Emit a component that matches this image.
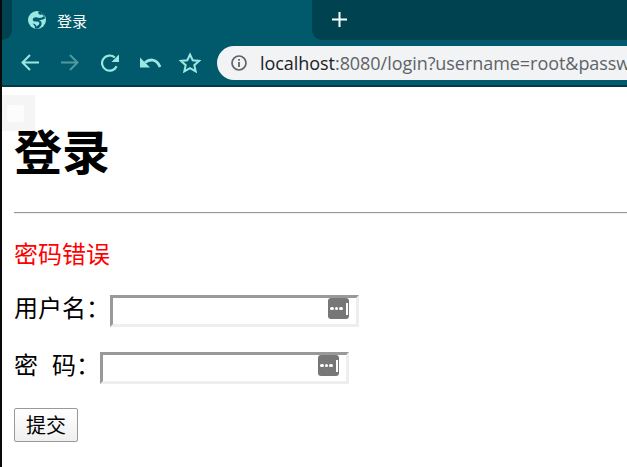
<div class="page">
  <div class="chrome">
    <div class="tabstrip">
      <div class="strip-left"></div>
      <div class="tab">
        <svg class="globe" width="18" height="18" viewBox="0 0 18 18" aria-hidden="true">
          <circle cx="9" cy="9" r="9" fill="#9be8e2"/>
          <path d="M10.5 0.5C9.5 3 11.5 4 14 3.5L16 5C14.5 7 11.5 7.5 9 6.5C7 5.8 4.5 7 4.8 9C5 10.8 7.5 10.5 9 10.5C11 10.5 12 12 11 13.5L8.5 15.5C8 13.5 6.5 12.7 4.5 12.5C6.5 14 7 15.5 7 17.5L9.5 17.8C12.5 16.5 14 14 13.5 11.5C13 9.5 10.5 8.5 8.8 8.8C10.5 9.5 14 9 17 7.5L16 3.5L12.5 0.5Z" fill="#005a6b"/>
        </svg>
        <span class="tabtitle">登录</span>
      </div>
      <div class="strip-right">
        <svg class="plus" width="15" height="15" viewBox="0 0 15 15" aria-hidden="true">
          <path d="M7.5 0V15M0 7.5H15" stroke="#fff" stroke-width="2"/>
        </svg>
      </div>
    </div>
    <div class="toolbar">
      <span class="cell"><svg width="18" height="17" viewBox="0 0 18 17" aria-hidden="true"><path d="M18 8.5H2M9 1L1.5 8.5L9 16" fill="none" stroke="#9be8e2" stroke-width="2"/></svg></span>
      <span class="cell"><svg width="18" height="17" viewBox="0 0 18 17" aria-hidden="true"><path d="M0 8.5H16M9 1L16.5 8.5L9 16" fill="none" stroke="#4f9a9f" stroke-width="2"/></svg></span>
      <span class="cell"><svg width="18" height="18" viewBox="0 0 18 18" aria-hidden="true"><path d="M15.6 12.2A7.6 7.6 0 1 1 13.8 3.5" fill="none" stroke="#9be8e2" stroke-width="2.2"/><path d="M18 0.5V8H10.5Z" fill="#9be8e2"/></svg></span>
      <span class="cell"><svg width="21" height="11" viewBox="0 0 21 11" aria-hidden="true"><path d="M5 5.5C10 1.5 17 2 20 10" fill="none" stroke="#9be8e2" stroke-width="2.8"/><path d="M0 0.5V10.5H10Z" fill="#9be8e2"/></svg></span>
      <span class="cell"><svg width="22" height="21" viewBox="0 0 22 21" aria-hidden="true"><path d="M11 2.5L13.7 8.2L20 8.9L15.3 13.2L16.7 19.4L11 16.2L5.3 19.4L6.7 13.2L2 8.9L8.3 8.2Z" fill="none" stroke="#9be8e2" stroke-width="2"/></svg></span>
      <div class="omni">
        <svg class="info" width="16" height="16" viewBox="0 0 16 16" aria-hidden="true"><circle cx="8" cy="8" r="7" fill="none" stroke="#5f6368" stroke-width="1.7"/><path d="M8 7V12M8 4V5.8" stroke="#5f6368" stroke-width="1.8"/></svg>
        <span class="url"><b>localhost</b>:8080/login?username=root&amp;password=123</span>
      </div>
    </div>
  </div>
  <div class="content">
    <div class="ghost"><div></div></div>
    <h1>登录</h1>
    <hr />
    <p class="err">密码错误</p>
    <form>
      <div class="row">
        <label for="u">用户名：</label>
        <span class="field"><input id="u" type="text" /><span class="key"><i></i><i></i><i></i><u></u></span></span>
      </div>
      <div class="row">
        <label for="p">密<span class="gap"></span>码：</label>
        <span class="field"><input id="p" type="password" /><span class="key"><i></i><i></i><i></i><u></u></span></span>
      </div>
      <button type="button">提交</button>
    </form>
  </div>
</div>

<style>
  :global(body) { margin: 0; background: #fff; overflow: hidden; }
  .page { width: 627px; height: 467px; box-sizing: border-box; border-left: 2px solid #0a0a0a; overflow: hidden; font-family: "Liberation Serif", "Noto Sans CJK SC", serif; }
  .chrome { border-bottom: 2px solid #003a45; }
  .tabstrip { height: 40px; background: #005a6b; display: flex; }
  .strip-left { width: 10px; background: #00424f; border-radius: 0 0 10px 0; }
  .strip-right { flex: 1; background: #00424f; border-radius: 0 0 0 10px; display: flex; align-items: center; padding: 0 0 2px 20px; box-sizing: border-box; }
  .tab { width: 300px; background: #005a6b; display: flex; align-items: center; padding-left: 16px; box-sizing: border-box; gap: 11px; }
  .globe, .plus, .info { flex: none; }
  .tabtitle { color: #fff; font: 15px "Noto Sans CJK SC", sans-serif; }
  .toolbar { height: 45px; background: #005a6b; display: flex; align-items: center; padding-left: 8px; box-sizing: border-box; }
  .cell { flex: none; width: 40px; display: flex; justify-content: center; align-items: center; }
  .cell svg { flex: none; }
  .omni { flex: 1; min-width: 0; margin-left: 7px; height: 34px; background: #f1f3f4; border-radius: 17px 0 0 17px; display: flex; align-items: center; padding-left: 14px; gap: 13px; white-space: nowrap; overflow: hidden; }
  .url { font: 18px "Open Sans", sans-serif; letter-spacing: -0.05px; color: #5f6368; }
  .url b { font-weight: 400; color: #202124; }
  .content { position: relative; padding-left: 12px; }
  .ghost { position: absolute; left: 0; top: 8px; width: 33px; height: 36px; background: #f5f5f5; padding: 10px 0 0 5px; box-sizing: border-box; }
  .ghost div { width: 17px; height: 17px; background: #fcfcfc; border-radius: 2px; }
  h1 { position: relative; margin: 0; padding-top: 32px; font: 700 48px/60px "Noto Sans CJK SC", sans-serif; color: #000; }
  hr { margin: 33px 0 0; height: 0; border: 0; border-top: 1px solid #999; border-bottom: 1px solid #eee; }
  .err { margin: 0; padding-top: 21px; color: #f00; font: 24px/36px "Noto Sans CJK SC", sans-serif; }
  form { margin-top: 24px; }
  .row { display: flex; align-items: flex-start; height: 32px; margin-bottom: 25px; font: 24px/24px "Noto Sans CJK SC", sans-serif; }
  .row + .row { margin-bottom: 24px; }
  label { white-space: pre; }
  .gap { display: inline-block; width: 14px; }
  .field { position: relative; display: block; width: 249px; height: 32px; }
  input { display: block; width: 100%; height: 100%; box-sizing: border-box; border: 3px solid; border-color: #999 #eee #eee #999; padding: 0; margin: 0; background: #fff; outline: none; }
  .key { position: absolute; right: 10px; top: 3px; width: 21px; height: 21px; background: #777; border-radius: 3px; display: flex; align-items: center; padding-left: 2px; gap: 1px; box-sizing: border-box; }
  .key i { width: 3.5px; height: 3.5px; border-radius: 50%; background: #fff; }
  .key u { width: 2px; height: 12px; background: #fff; margin-left: 2px; }
  button { display: block; width: 64px; height: 34px; padding: 0; background: linear-gradient(#fff, #efefef); border: 1px solid #999; border-radius: 2px; color: #000; font: 20px/30px "Noto Sans CJK SC", sans-serif; }
</style>
